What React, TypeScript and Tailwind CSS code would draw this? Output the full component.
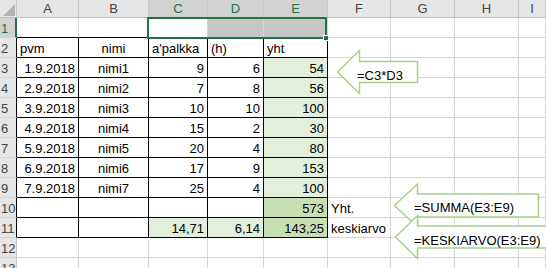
import React from "react";

type Align = "left" | "right" | "center";
type Fill = "none" | "sel" | "g1" | "g2";

interface CellSpec {
  t?: string;
  a?: Align;
  fill?: Fill;
  boxed?: boolean; // thin black cell border
  topBlack?: boolean; // bottom edge black (row above the table)
}

const COLS = ["A", "B", "C", "D", "E", "F", "G", "H", "I"];
const SELECTED_COLS = new Set(["C", "D", "E"]);

const alignCls: Record<Align, string> = {
  left: "justify-start pl-[3px]",
  right: "justify-end pr-[3px]",
  center: "justify-center",
};

const fillCls: Record<Fill, string> = {
  none: "bg-white",
  sel: "bg-[#c6c6c6]",
  g1: "bg-[#e2efda]",
  g2: "bg-[#c6e0b4]",
};

const dates = ["1.9.2018", "2.9.2018", "3.9.2018", "4.9.2018", "5.9.2018", "6.9.2018", "7.9.2018"];
const pay = ["9", "7", "10", "15", "20", "17", "25"];
const hours = ["6", "8", "10", "2", "4", "9", "4"];
const totals = ["54", "56", "100", "30", "80", "153", "100"];

function buildRows(): CellSpec[][] {
  const rows: CellSpec[][] = [];
  // row 1
  rows.push([
    { topBlack: true },
    { topBlack: true },
    { topBlack: true },
    { topBlack: true, fill: "sel" },
    { topBlack: true, fill: "sel" },
    {},
    {},
    {},
    {},
  ]);
  // row 2
  rows.push([
    { t: "pvm", a: "left", boxed: true },
    { t: "nimi", a: "center", boxed: true },
    { t: "a'palkka", a: "left", boxed: true },
    { t: "(h)", a: "left", boxed: true },
    { t: "yht", a: "left", boxed: true },
    {},
    {},
    {},
    {},
  ]);
  for (let i = 0; i < 7; i++) {
    rows.push([
      { t: dates[i], a: "right", boxed: true },
      { t: `nimi${i + 1}`, a: "center", boxed: true },
      { t: pay[i], a: "right", boxed: true },
      { t: hours[i], a: "right", boxed: true },
      { t: totals[i], a: "right", boxed: true, fill: "g1" },
      {},
      {},
      {},
      {},
    ]);
  }
  // row 10
  rows.push([
    { boxed: true },
    { boxed: true },
    { boxed: true },
    { boxed: true },
    { t: "573", a: "right", boxed: true, fill: "g2" },
    { t: "Yht.", a: "left" },
    {},
    {},
    {},
  ]);
  // row 11
  rows.push([
    { boxed: true },
    { boxed: true },
    { t: "14,71", a: "right", boxed: true, fill: "g1" },
    { t: "6,14", a: "right", boxed: true, fill: "g1" },
    { t: "143,25", a: "right", boxed: true, fill: "g2" },
    { t: "keskiarvo", a: "left" },
    {},
    {},
    {},
  ]);
  rows.push(Array.from({ length: 9 }, () => ({})));
  rows.push(Array.from({ length: 9 }, () => ({})));
  return rows;
}

function Cell({ c }: { c: CellSpec }) {
  const right = c.boxed ? "border-r-black" : "border-r-[#d4d4d4]";
  const bottom = c.boxed || c.topBlack ? "border-b-black" : "border-b-[#d4d4d4]";
  return (
    <div
      className={`flex h-[20px] items-end overflow-visible whitespace-nowrap border-r border-b leading-[16px] ${right} ${bottom} ${
        fillCls[c.fill ?? "none"]
      } ${alignCls[c.a ?? "left"]}`}
    >
      {c.t ?? ""}
    </div>
  );
}

function RowHeader({ n }: { n: number }) {
  const selected = n === 1;
  const boxed = n >= 2 && n <= 11;
  const right = selected
    ? "border-r-2 border-r-[#217346]"
    : boxed
    ? "border-r border-r-black"
    : "border-r border-r-[#c8c8c8]";
  return (
    <div
      className={`flex h-[20px] items-end border-b border-b-[#d4d4d4] pl-[1px] leading-[16px] ${right} ${
        selected ? "bg-[#d2d2d2] text-[#217346]" : "bg-[#e6e6e6] text-[#444]"
      }`}
    >
      {n}
    </div>
  );
}

function ColHeader({ l }: { l: string }) {
  const sel = SELECTED_COLS.has(l);
  return (
    <div
      className={`flex h-[18px] items-center justify-center border-r border-b border-r-[#c8c8c8] border-b-[#bdbdbd] leading-[16px] ${
        sel ? "bg-[#d2d2d2] text-[#217346]" : "bg-[#e6e6e6] text-[#444]"
      }`}
    >
      {l}
    </div>
  );
}

function Corner() {
  return (
    <div className="relative h-[18px] border-r border-b border-r-[#c8c8c8] border-b-[#bdbdbd] bg-[#e6e6e6]">
      <svg className="absolute left-0 top-0" width="17" height="18" viewBox="0 0 17 18">
        <polygon points="15,4 15,16 3,16" fill="#b4b4b4" />
      </svg>
    </div>
  );
}

// Left-pointing block arrow: tip at (tx, cy), head back edge at hx, body to rx.
function arrowPoints(tx: number, hx: number, rx: number, cy: number, headHalf: number, bodyHalf: number) {
  return [
    [tx, cy],
    [hx, cy - headHalf],
    [hx, cy - bodyHalf],
    [rx, cy - bodyHalf],
    [rx, cy + bodyHalf],
    [hx, cy + bodyHalf],
    [hx, cy + headHalf],
  ]
    .map((p) => p.join(","))
    .join(" ");
}

export default function App() {
  const rows = buildRows();
  return (
    <div
      className="relative h-[268px] w-[546px] overflow-hidden bg-white text-[13px] text-black"
      style={{ fontFamily: '"Liberation Sans", Arial, sans-serif' }}
    >
      <div className="grid grid-cols-[17px_62px_70px_59px_56px_64px_63px_64px_64px_1fr]">
        <Corner />
        {COLS.map((l) => (
          <ColHeader key={l} l={l} />
        ))}
        {rows.map((r, ri) => (
          <React.Fragment key={ri}>
            <RowHeader n={ri + 1} />
            {r.map((c, ci) => (
              <Cell key={ci} c={c} />
            ))}
          </React.Fragment>
        ))}
      </div>

      {/* active range C1:E1 */}
      <div className="pointer-events-none absolute left-[147px] top-[17px] h-[22px] w-[180px] border-2 border-[#217346]" />
      <div className="pointer-events-none absolute left-[323px] top-[35px] h-[6px] w-[6px] border border-white bg-[#217346]" />

      {/* callout arrows */}
      <svg className="pointer-events-none absolute left-0 top-0" width="546" height="268" viewBox="0 0 546 268">
        <polygon
          points={arrowPoints(337.5, 359.5, 417.5, 72, 21.5, 10.5)}
          fill="white"
          stroke="#a9d18e"
          strokeWidth="1.5"
        />
        <polygon
          points={arrowPoints(394.5, 417.5, 538.5, 205.5, 21.5, 11.5)}
          fill="white"
          stroke="#a9d18e"
          strokeWidth="1.5"
        />
        <polygon
          points={arrowPoints(395.5, 417.5, 560, 237, 21.5, 11)}
          fill="white"
          stroke="#a9d18e"
          strokeWidth="1.5"
        />
      </svg>
      <div className="pointer-events-none absolute left-[357px] top-[68px] whitespace-nowrap leading-[16px]">=C3*D3</div>
      <div className="pointer-events-none absolute left-[414px] top-[200px] whitespace-nowrap leading-[16px]">=SUMMA(E3:E9)</div>
      <div className="pointer-events-none absolute left-[414px] top-[233px] whitespace-nowrap leading-[16px]">
        =KESKIARVO(E3:E9)
      </div>
    </div>
  );
}
